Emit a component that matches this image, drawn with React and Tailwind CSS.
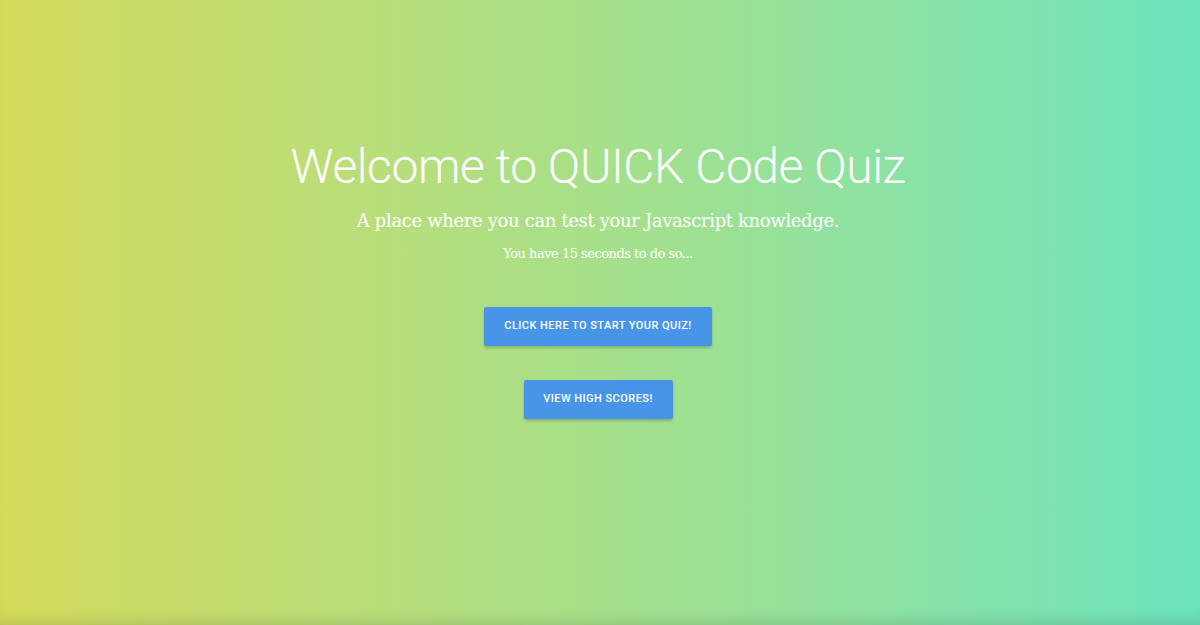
export default function App() {
  return (
    <div className="w-full h-[625px] overflow-hidden bg-gradient-to-r from-[#d4db5b] via-[#a6e08a] to-[#6be3bc] shadow-[inset_0_-14px_14px_-10px_rgba(0,0,0,0.12)] font-['Roboto',sans-serif] text-white">
      <div className="flex flex-col items-center pt-[139px] pr-[4px]">
        <h1 className="text-[48px] leading-[56px] font-light tracking-[-0.45px]">
          Welcome to QUICK Code Quiz
        </h1>
        <p className="mt-[14px] text-[18px] leading-[24px] font-['DejaVu_Serif',serif] tracking-[-0.35px]">
          A place where you can test your Javascript knowledge.
        </p>
        <p className="mt-[12px] text-[13px] leading-[18px] font-['DejaVu_Serif',serif] tracking-[-0.5px]">
          You have 15 seconds to do so...
        </p>
        <button className="mt-[44px] w-[228px] h-[39px] bg-[#4895e8] text-[11px] font-medium uppercase tracking-[0.45px] rounded-[2px] shadow-[0_2px_3px_rgba(0,0,0,0.2)]">
          Click here to start your quiz!
        </button>
        <button className="mt-[34px] w-[149px] h-[39px] bg-[#4895e8] text-[11px] font-medium uppercase tracking-[0.45px] rounded-[2px] shadow-[0_2px_3px_rgba(0,0,0,0.2)]">
          View high scores!
        </button>
      </div>
    </div>
  );
}
